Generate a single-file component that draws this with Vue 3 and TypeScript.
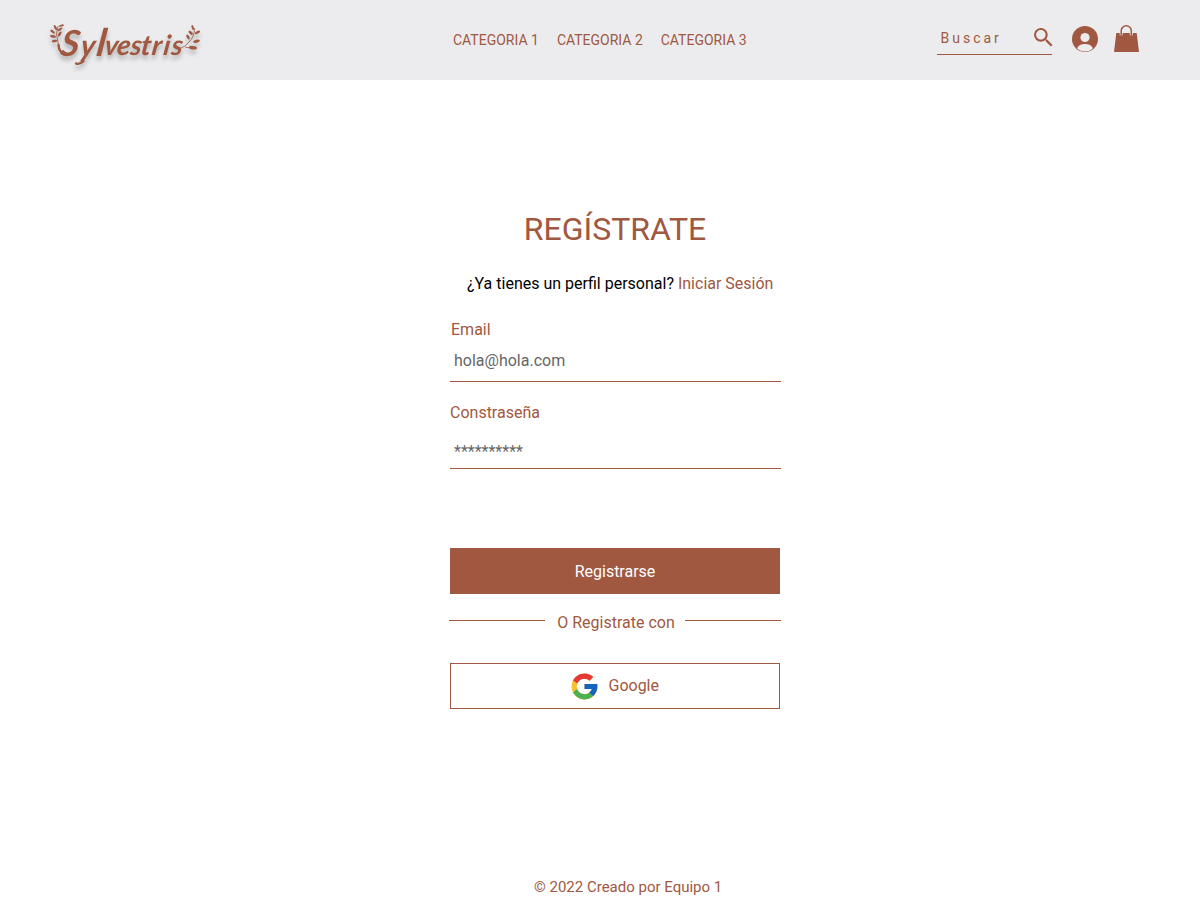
<script setup lang="ts">
import { ref } from 'vue'

interface Leaf {
  x: number
  y: number
  rx: number
  ry: number
  angle: number
}

const categories: string[] = ['CATEGORIA 1', 'CATEGORIA 2', 'CATEGORIA 3']

const leftLeaves: Leaf[] = [
  { x: 5.4, y: 7.6, rx: 2.9, ry: 1.1, angle: 60 },
  { x: 2.6, y: 11.6, rx: 2.8, ry: 1.2, angle: 38 },
  { x: 3, y: 16.4, rx: 3, ry: 1.3, angle: 10 },
  { x: 4.6, y: 21, rx: 2.8, ry: 1.2, angle: -8 },
  { x: 11.3, y: 5.6, rx: 2.7, ry: 1, angle: -15 },
  { x: 10, y: 9.3, rx: 2.8, ry: 1.1, angle: -32 },
  { x: 9.7, y: 14, rx: 2.8, ry: 1.2, angle: -55 },
]
const rightLeaves: Leaf[] = [
  { x: 142.7, y: 7.5, rx: 2.7, ry: 1.1, angle: 73 },
  { x: 147.5, y: 12.4, rx: 2.9, ry: 1.3, angle: -28 },
  { x: 140.7, y: 12.8, rx: 2.7, ry: 1.3, angle: 42 },
  { x: 138, y: 17, rx: 2.7, ry: 1.3, angle: 58 },
  { x: 146.5, y: 21.3, rx: 3.3, ry: 1.5, angle: -12 },
  { x: 143, y: 27.7, rx: 4, ry: 1.8, angle: 8 },
]

const search = ref('')
const email = ref('')
const password = ref('')
</script>

<template>
  <div class="page">
    <header class="header">
      <svg class="logo" width="152" height="60" viewBox="0 0 152 60" aria-label="Sylvestris">
        <g class="leaves">
          <ellipse
            v-for="(leaf, i) in [...leftLeaves, ...rightLeaves]"
            :key="i"
            :cx="leaf.x"
            :cy="leaf.y"
            :rx="leaf.rx"
            :ry="leaf.ry"
            :transform="`rotate(${leaf.angle} ${leaf.x} ${leaf.y})`"
          />
        </g>
        <path class="stem" d="M8 6Q5 14 8 22L9 26M144.5 8Q144.5 17 139 22Q135 27 129 29M135 27L141 28" />
        <path class="flourish" d="M8.5 25Q9 32 14 34M33.5 41Q29 45 26 43.5" />
        <text class="wordmark" y="35" transform="translate(5 0) skewX(-8)">
          <tspan class="initial" x="9.5" y="35.5">S</tspan>
          <tspan class="descender" x="29.5" y="36">y</tspan>
          <tspan class="tall" x="45.5" y="35.5">l</tspan>
          <tspan x="53.5 66 79.5 90 101 112.5 120.5" y="35.5 35.5 35.5 35.5 35.5 35.5 35">vestris</tspan>
        </text>
      </svg>

      <nav class="nav">
        <a v-for="category in categories" :key="category">{{ category }}</a>
      </nav>

      <div class="tools">
        <label class="search">
          <input v-model="search" type="text" placeholder="Buscar" />
          <svg width="19" height="19" viewBox="3 3 18 18">
            <path d="M15.5 14h-.79l-.28-.27A6.47 6.47 0 0 0 16 9.5 6.5 6.5 0 1 0 9.5 16c1.61 0 3.09-.59 4.23-1.57l.27.28v.79l5 4.99L20.49 19l-4.99-5zm-6 0C7.01 14 5 11.99 5 9.5S7.01 5 9.5 5 14 7.01 14 9.5 11.99 14 9.5 14z" />
          </svg>
        </label>
        <svg class="user" width="26" height="26" viewBox="0 0 26 26">
          <circle cx="13" cy="13" r="13" />
          <g class="cutout">
            <circle cx="13" cy="11.5" r="4.6" />
            <path d="M5 22.2C6.2 19.5 9.2 18 13 18s6.8 1.5 8 4.2C18.8 24.3 16 25.4 13 25.4S7.2 24.3 5 22.2Z" />
          </g>
        </svg>
        <svg class="bag" width="25" height="27" viewBox="0 0 25 27">
          <path d="M2.3 8H22.7L25 27H0Z" />
          <path class="handle-gap" d="M7.2 8v2.3M17.3 8v2.3" />
          <path class="handle" d="M7.2 10V5.8a5.05 5.05 0 0 1 10.1 0V10" />
        </svg>
      </div>
    </header>

    <main class="register">
      <h1>REGÍSTRATE</h1>
      <p class="prompt">¿Ya tienes un perfil personal? <a>Iniciar Sesión</a></p>
      <form @submit.prevent>
        <label class="field email">
          <span>Email</span>
          <input v-model="email" type="text" placeholder="hola@hola.com" />
        </label>
        <label class="field password">
          <span>Constraseña</span>
          <input v-model="password" type="password" placeholder="**********" />
        </label>
        <button class="submit" type="submit">Registrarse</button>
        <div class="divider"><i></i><span>O Registrate con</span><i></i></div>
        <button class="google" type="button">
          <svg width="31" height="31" viewBox="0 0 48 48">
            <path fill="#fbc02d" d="M43.611 20.083H42V20H24v8h11.303C33.654 32.657 29.223 36 24 36c-6.627 0-12-5.373-12-12s5.373-12 12-12c3.059 0 5.842 1.154 7.961 3.039l5.657-5.657C34.046 6.053 29.268 4 24 4 12.955 4 4 12.955 4 24s8.955 20 20 20 20-8.955 20-20c0-1.341-.138-2.65-.389-3.917z" />
            <path fill="#e53935" d="M6.306 14.691l6.571 4.819C14.655 15.108 18.961 12 24 12c3.059 0 5.842 1.154 7.961 3.039l5.657-5.657C34.046 6.053 29.268 4 24 4 16.318 4 9.656 8.337 6.306 14.691z" />
            <path fill="#4caf50" d="M24 44c5.166 0 9.86-1.977 13.409-5.192l-6.19-5.238C29.211 35.091 26.715 36 24 36c-5.202 0-9.619-3.317-11.283-7.946l-6.522 5.025C9.505 39.556 16.227 44 24 44z" />
            <path fill="#1565c0" d="M43.611 20.083L43.595 20H24v8h11.303c-.792 2.237-2.231 4.166-4.087 5.571l6.193 5.237C36.971 39.205 44 34 44 24c0-1.341-.138-2.65-.389-3.917z" />
          </svg>
          <span>Google</span>
        </button>
      </form>
    </main>

    <footer>© 2022 Creado por Equipo 1</footer>
  </div>
</template>

<style>
body {
  margin: 0;
}
</style>

<style scoped>
.page {
  --brand: #a05840;
  display: flex;
  flex-direction: column;
  height: 914px;
  background: #fff;
  color: var(--brand);
  font: 16px/20px Roboto, sans-serif;
  overflow: hidden;
}
.header {
  display: grid;
  grid-template-columns: 403px 1fr 203px;
  height: 80px;
  padding: 0 60px 0 50px;
  box-sizing: border-box;
  background: #ececee;
}
svg {
  display: block;
  flex: none;
  fill: var(--brand);
}
.logo {
  margin-top: 20px;
  overflow: visible;
  filter: drop-shadow(0 4px 2px rgb(0 0 0 / 25%));
}
.stem,
.flourish {
  fill: none;
  stroke: var(--brand);
  stroke-width: 0.8;
}
.flourish {
  stroke-width: 2.4;
  stroke-linecap: round;
}
.wordmark {
  font: italic 700 28px Lato, sans-serif;
}
.initial {
  font-size: 36px;
}
.descender {
  font-size: 30px;
}
.tall {
  font-size: 38px;
}
.nav {
  display: flex;
  gap: 18px;
  padding-top: 30px;
  font-size: 14px;
  white-space: nowrap;
}
.tools {
  display: flex;
  align-items: flex-start;
}
.search {
  display: flex;
  align-items: flex-start;
  width: 115px;
  height: 27px;
  margin-top: 27px;
  border-bottom: 1px solid var(--brand);
}
.search svg {
  margin: 0.5px -1px 0 1px;
}
input {
  box-sizing: border-box;
  min-width: 0;
  border: 0;
  outline: 0;
  background: transparent;
  font: inherit;
}
.search input {
  flex: 1;
  height: 22px;
  padding: 0 0 0 3.5px;
  font-size: 14px;
  letter-spacing: 3px;
}
.search input::placeholder {
  color: var(--brand);
}
.user {
  margin: 26px 0 0 20px;
}
.cutout {
  fill: #ececee;
}
.bag {
  margin: 25px 0 0 16px;
}
.handle,
.handle-gap {
  fill: none;
  stroke: var(--brand);
  stroke-width: 1.5;
}
.handle-gap {
  stroke: #ececee;
  stroke-width: 3;
}
.register {
  width: 331px;
  margin: 129px 0 0 450px;
}
h1 {
  width: 330px;
  margin: 0;
  font-size: 32px;
  font-weight: 400;
  line-height: 40px;
  text-align: center;
}
.prompt {
  margin: 25px 0 0 17px;
  color: #000;
  white-space: nowrap;
}
.prompt a {
  color: var(--brand);
}
.field {
  display: flex;
  flex-direction: column;
  border-bottom: 1px solid var(--brand);
}
.field input {
  padding: 0 4px;
  color: #757575;
}
.field input::placeholder {
  color: #666;
}
.email {
  height: 61px;
  margin-top: 26px;
}
.email span {
  margin-left: 1px;
}
.email input {
  height: 22px;
  margin-top: 9px;
}
.password {
  height: 65px;
  margin-top: 21px;
}
.password input {
  height: 22px;
  margin-top: 17px;
}
button {
  display: flex;
  align-items: center;
  justify-content: center;
  width: 330px;
  height: 46px;
  padding: 0;
  border: 1px solid var(--brand);
  font: inherit;
}
.submit {
  margin-top: 79px;
  padding-top: 2px;
  background: var(--brand);
  color: #fff;
}
.divider {
  display: flex;
  justify-content: space-between;
  width: 332px;
  margin: 18px 0 0 -1px;
}
.divider i {
  width: 96px;
  height: 1px;
  margin-top: 8px;
  background: var(--brand);
}
.divider span {
  margin: 1px 0 0 2px;
}
.google {
  gap: 8px;
  margin-top: 30px;
  padding-right: 1.5px;
  background: #fff;
  color: var(--brand);
}
footer {
  margin: auto 0 17px 534px;
  font-size: 15px;
}
</style>
